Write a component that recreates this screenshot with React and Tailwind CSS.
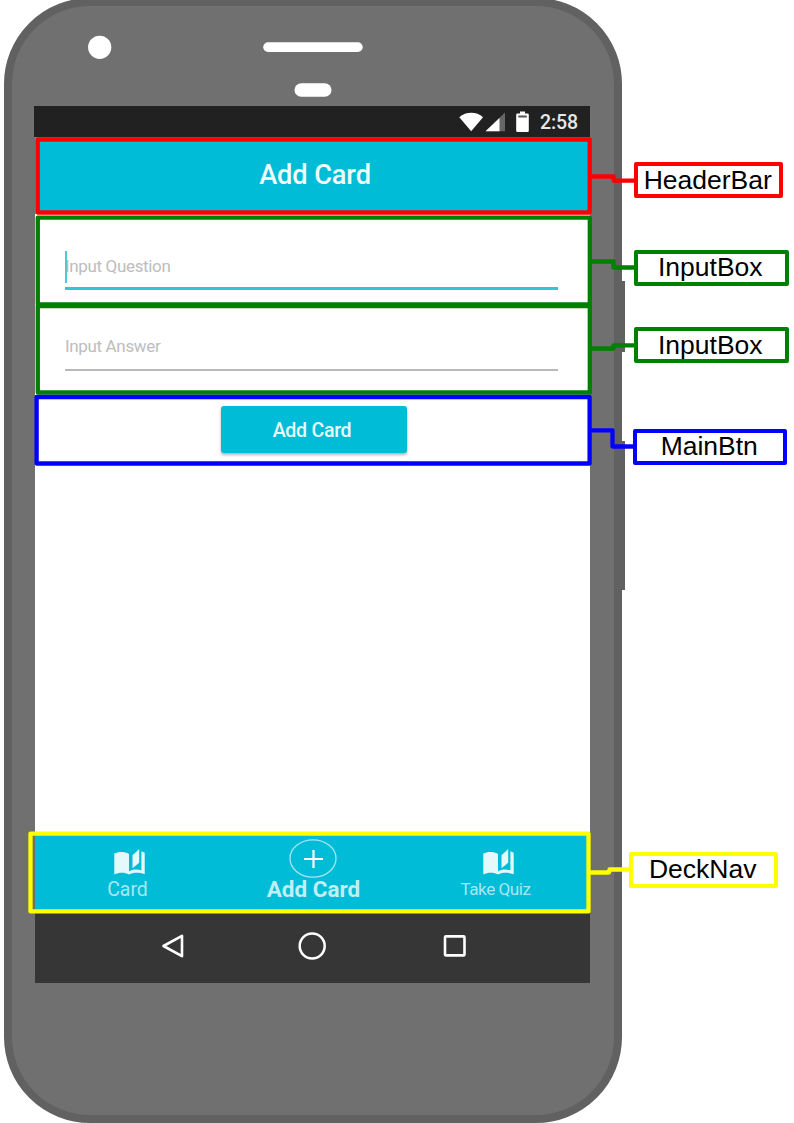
import React from "react";

function BookIcon() {
  return (
    <svg width="31" height="26" viewBox="0 0 31 26" fill="#e5f8fb" className="block">
      <path d="M0.3 4.600C4 2.300 11 2.300 15 4.900V22.300C18.500 20.200 23.200 20 27.400 21.300V2.200C28.600 2.600 29.800 3.100 30.700 3.800V25.300C25.500 23.300 19 23.300 15 25.500C11 23.300 5 23.300 0.300 25.400Z" />
      <path d="M18.500 6.200L25.200 0V13.800L18.500 19.300Z" />
    </svg>
  );
}

function StatusBar() {
  return (
    <div className="-ml-px flex h-[31px] w-[556px] items-center bg-[#212121] pl-[425px]">
      <svg width="46" height="22" viewBox="0 0 46 22" className="block shrink-0">
        <path d="M0.3 6.2C7 0.4 17.500 0.400 24 6.200L12.200 20.300Z" fill="#fff" />
        <path d="M46 1.500V20.300H26.500Z" fill="#666" />
        <path d="M40.500 7V20.300H26.500Z" fill="#fff" />
      </svg>
      <svg width="13" height="22" viewBox="0 0 13 22" className="ml-[11px] block shrink-0">
        <path d="M4 0.500H9V2.500H11.500Q12.800 2.500 12.800 3.800V19.700Q12.800 21 11.500 21H1.500Q0.200 21 0.200 19.700V3.800Q0.200 2.500 1.500 2.500H4Z" fill="#fff" />
        <rect x="2.300" y="4.500" width="8.500" height="2" fill="#555" />
      </svg>
      <span className="ml-[11px] pt-px text-[19.500px] leading-[31px] font-medium tracking-[-0.1px] text-[#e6e6e6]">2:58</span>
    </div>
  );
}

function HeaderBar() {
  return (
    <header className="flex h-[77px] justify-center bg-[#00bcd6] pl-[5px]">
      <h1 className="text-[27.200px] leading-[77px] font-medium tracking-[-0.1px] text-[#f2fcfd]">Add Card</h1>
    </header>
  );
}

function InputBox({ label, focused }) {
  return (
    <div className="flex h-[80px] flex-col px-[30px]">
      <div className="flex h-[33px] items-center">
        {focused && <span className="h-[32px] w-[1.500px] bg-[#4cc9da]" />}
        <span className={focused ? "-ml-[1.500px] pb-[2px] text-[17px] leading-[32px] tracking-[-0.35px] text-[#bdbdbd]" : "pb-[2px] text-[17px] leading-[32px] tracking-[-0.35px] text-[#bdbdbd]"}>{label}</span>
      </div>
      <div className={focused ? "mt-[4px] h-[3px] w-[493px] bg-[#35c3d9]" : "mt-[6px] h-[1.500px] w-[493px] bg-[#b9b9b9]"} />
    </div>
  );
}

function MainBtn() {
  return (
    <button className="ml-[186px] flex h-[47px] w-[186px] justify-center rounded-[3px] bg-[#00bcd6] pr-[4px] text-[19.600px] leading-[49px] font-medium tracking-[-0.3px] text-[#e9fafc] shadow-[0_2px_3px_rgba(0,0,0,0.3)]">
      Add Card
    </button>
  );
}

function DeckNav() {
  return (
    <nav className="flex h-[78px] bg-[#00bcd6]">
      <div className="flex w-[185px] flex-col items-center pt-[15px]">
        <div className="pl-[3px]">
          <BookIcon />
        </div>
        <span className="mt-[2px] text-[19.500px] leading-[26px] text-[#a6e8f1]">Card</span>
      </div>
      <div className="flex w-[185px] flex-col items-center pt-[5px]">
        <svg width="48" height="39" viewBox="0 0 48 39" fill="none" className="block">
          <ellipse cx="24" cy="19.500" rx="23" ry="18.700" stroke="#a6e8f1" strokeWidth="1.300" />
          <path d="M15 20H34M24.500 11V29" stroke="#fff" strokeWidth="2.200" />
        </svg>
        <span className="-mt-[2px] pl-[2px] text-[22.500px] leading-[26px] font-bold text-[#c0eff5]">Add Card</span>
      </div>
      <div className="flex w-[185px] flex-col items-center pt-[15px]">
        <div className="pl-[2px]">
          <BookIcon />
        </div>
        <span className="mt-px pr-[4px] text-[17.200px] leading-[26px] tracking-[-0.5px] text-[#a6e8f1]">Take Quiz</span>
      </div>
    </nav>
  );
}

function SystemNav() {
  return (
    <div className="flex h-[70.5px] items-center bg-[#363636] pb-[3px]">
      <svg width="24" height="26" viewBox="0 0 24 26" className="ml-[126px] block" fill="none" stroke="#fff" strokeWidth="2.600" strokeLinejoin="round">
        <path d="M2.500 13L21 2.800V23.200Z" />
      </svg>
      <svg width="30" height="30" viewBox="0 0 30 30" className="ml-[112px] block" fill="none" stroke="#fff" strokeWidth="2.500">
        <circle cx="15.200" cy="15" r="12.500" />
      </svg>
      <svg width="24" height="24" viewBox="0 0 24 24" className="ml-[116px] block" fill="none" stroke="#fff" strokeWidth="2.600">
        <rect x="2" y="2.400" width="19.500" height="19" rx="1" />
      </svg>
    </div>
  );
}

function Phone() {
  return (
    <div className="relative -mt-[2px] ml-[4px] h-[1125px] w-[618px] rounded-[86px] border-8 border-[#616161] bg-[#707070]">
      <div className="absolute top-[275px] left-[609px] h-[71px] w-[3.500px] bg-[#616161]" />
      <div className="absolute top-[435px] left-[609px] h-[149px] w-[3.500px] bg-[#616161]" />
      <svg width="602" height="100" viewBox="0 0 602 100" fill="#fff" className="block">
        <circle cx="87.700" cy="41.300" r="11.600" />
        <rect x="251.200" y="36.300" width="99.500" height="9.700" rx="4.850" />
        <rect x="282.500" y="77.300" width="37" height="13.500" rx="6.750" />
      </svg>
      <div className="ml-[23px] flex w-[555px] flex-col bg-white">
        <StatusBar />
        <HeaderBar />
        <div className="pt-[36px]">
          <InputBox label="Input Question" focused />
          <InputBox label="Input Answer" />
        </div>
        <div className="-mt-[4px] h-[428px]">
          <MainBtn />
        </div>
        <DeckNav />
        <SystemNav />
      </div>
    </div>
  );
}

function Label({ className, children }) {
  return (
    <div className={`absolute rounded-[2px] border-[4.500px] bg-white text-center text-[26.500px] text-black ${className}`}>
      {children}
    </div>
  );
}

function Annotations() {
  return (
    <div className="absolute inset-0 font-['Liberation_Sans',Arial,sans-serif]">
      <svg width="794" height="1123" viewBox="0 0 794 1123" className="absolute inset-0" fill="none" strokeWidth="4.300" strokeLinejoin="round">
        <g stroke="#ff0000">
          <rect x="37.700" y="139.500" width="552" height="73" />
          <path d="M590 176.500H613.700V180.700H636" />
        </g>
        <g stroke="#008000">
          <rect x="37.800" y="217.600" width="552" height="86.700" />
          <rect x="37.800" y="306" width="552" height="86.500" />
          <path d="M590 261.500H613.500V267.500H636" />
          <path d="M590 348.500H613.500V345.400H636" />
        </g>
        <g stroke="#0000ff">
          <rect x="36.600" y="397" width="553" height="66.500" />
          <path d="M590 430.300H612.500V446.500H636" />
        </g>
        <g stroke="#ffff00">
          <rect x="30.500" y="833.700" width="558" height="77.700" />
          <path d="M589 872.500H609L609.500 869.500H631" />
        </g>
      </svg>
      <Label className="top-[162px] left-[634px] h-[36px] w-[148.500px] border-[#ff0000] pr-px leading-[29px]">HeaderBar</Label>
      <Label className="top-[250px] left-[634px] h-[36px] w-[154.500px] border-[#008000] pr-[2px] leading-[27px]">InputBox</Label>
      <Label className="top-[327px] left-[634px] h-[36px] w-[154.500px] border-[#008000] pr-[2px] leading-[29px]">InputBox</Label>
      <Label className="top-[429px] left-[633px] h-[36px] w-[153.500px] border-[#0000ff] pr-px leading-[27px]">MainBtn</Label>
      <Label className="top-[852px] left-[629px] h-[36px] w-[148.500px] border-[#ffff00] pr-px leading-[27px]">DeckNav</Label>
    </div>
  );
}

export default function App() {
  return (
    <main className="relative flow-root h-[1123px] w-[794px] overflow-hidden bg-white font-[Roboto,sans-serif]">
      <Phone />
      <Annotations />
    </main>
  );
}
